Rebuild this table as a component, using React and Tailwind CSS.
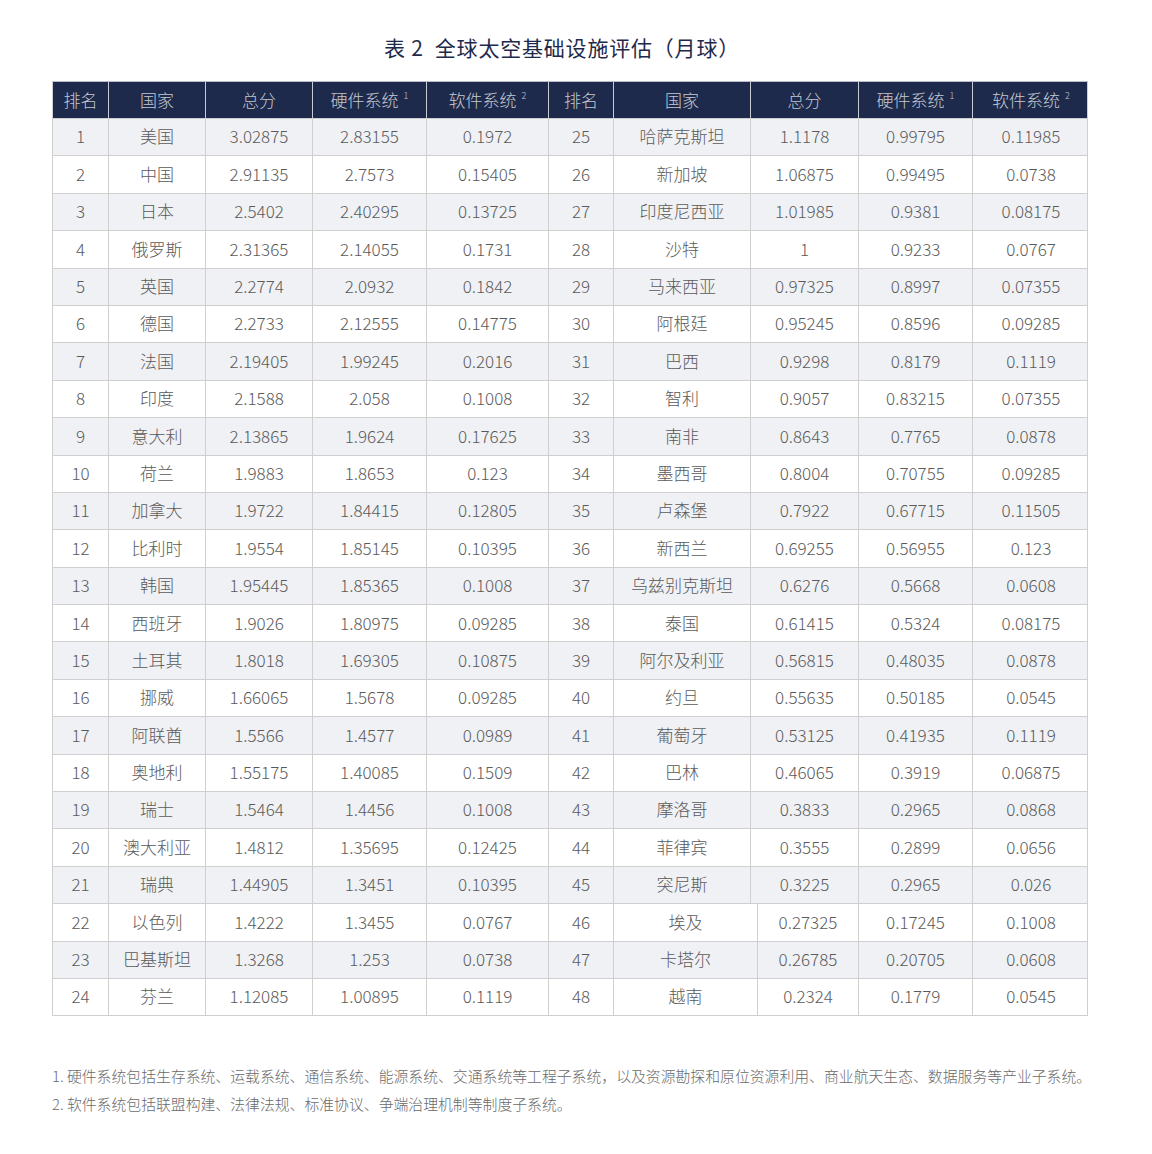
const left = [
  ["1", "美国", "3.02875", "2.83155", "0.1972"],
  ["2", "中国", "2.91135", "2.7573", "0.15405"],
  ["3", "日本", "2.5402", "2.40295", "0.13725"],
  ["4", "俄罗斯", "2.31365", "2.14055", "0.1731"],
  ["5", "英国", "2.2774", "2.0932", "0.1842"],
  ["6", "德国", "2.2733", "2.12555", "0.14775"],
  ["7", "法国", "2.19405", "1.99245", "0.2016"],
  ["8", "印度", "2.1588", "2.058", "0.1008"],
  ["9", "意大利", "2.13865", "1.9624", "0.17625"],
  ["10", "荷兰", "1.9883", "1.8653", "0.123"],
  ["11", "加拿大", "1.9722", "1.84415", "0.12805"],
  ["12", "比利时", "1.9554", "1.85145", "0.10395"],
  ["13", "韩国", "1.95445", "1.85365", "0.1008"],
  ["14", "西班牙", "1.9026", "1.80975", "0.09285"],
  ["15", "土耳其", "1.8018", "1.69305", "0.10875"],
  ["16", "挪威", "1.66065", "1.5678", "0.09285"],
  ["17", "阿联酋", "1.5566", "1.4577", "0.0989"],
  ["18", "奥地利", "1.55175", "1.40085", "0.1509"],
  ["19", "瑞士", "1.5464", "1.4456", "0.1008"],
  ["20", "澳大利亚", "1.4812", "1.35695", "0.12425"],
  ["21", "瑞典", "1.44905", "1.3451", "0.10395"],
  ["22", "以色列", "1.4222", "1.3455", "0.0767"],
  ["23", "巴基斯坦", "1.3268", "1.253", "0.0738"],
  ["24", "芬兰", "1.12085", "1.00895", "0.1119"],
];

const right = [
  ["25", "哈萨克斯坦", "1.1178", "0.99795", "0.11985"],
  ["26", "新加坡", "1.06875", "0.99495", "0.0738"],
  ["27", "印度尼西亚", "1.01985", "0.9381", "0.08175"],
  ["28", "沙特", "1", "0.9233", "0.0767"],
  ["29", "马来西亚", "0.97325", "0.8997", "0.07355"],
  ["30", "阿根廷", "0.95245", "0.8596", "0.09285"],
  ["31", "巴西", "0.9298", "0.8179", "0.1119"],
  ["32", "智利", "0.9057", "0.83215", "0.07355"],
  ["33", "南非", "0.8643", "0.7765", "0.0878"],
  ["34", "墨西哥", "0.8004", "0.70755", "0.09285"],
  ["35", "卢森堡", "0.7922", "0.67715", "0.11505"],
  ["36", "新西兰", "0.69255", "0.56955", "0.123"],
  ["37", "乌兹别克斯坦", "0.6276", "0.5668", "0.0608"],
  ["38", "泰国", "0.61415", "0.5324", "0.08175"],
  ["39", "阿尔及利亚", "0.56815", "0.48035", "0.0878"],
  ["40", "约旦", "0.55635", "0.50185", "0.0545"],
  ["41", "葡萄牙", "0.53125", "0.41935", "0.1119"],
  ["42", "巴林", "0.46065", "0.3919", "0.06875"],
  ["43", "摩洛哥", "0.3833", "0.2965", "0.0868"],
  ["44", "菲律宾", "0.3555", "0.2899", "0.0656"],
  ["45", "突尼斯", "0.3225", "0.2965", "0.026"],
  ["46", "埃及", "0.27325", "0.17245", "0.1008"],
  ["47", "卡塔尔", "0.26785", "0.20705", "0.0608"],
  ["48", "越南", "0.2324", "0.1779", "0.0545"],
];

const heads = ["排名", "国家", "总分", "硬件系统", "软件系统"];
const notes = [null, null, null, "1", "2"];

function Head() {
  const cells = [...heads, ...heads].map((h, i) => (
    <div
      key={i}
      className="flex items-center justify-center border-r border-[#c6cad3] last:border-r-0"
    >
      {h}
      {notes[i % 5] && (
        <sup className="ml-[5px] text-[9px] relative -top-[4px]">{notes[i % 5]}</sup>
      )}
    </div>
  ));
  return (
    <div className="grid grid-cols-[56px_97px_107px_114px_122px_65px_137px_108px_114px_116px] h-[36px] bg-[#1e2a4b] text-[#c3c8d2] text-[17px] font-light">
      {cells}
    </div>
  );
}

function Row({ l, r, i }) {
  const shifted = i >= 21;
  const cols = shifted
    ? "grid-cols-[56px_97px_107px_114px_122px_65px_144px_101px_114px_116px]"
    : "grid-cols-[56px_97px_107px_114px_122px_65px_137px_108px_114px_116px]";
  const bg = i % 2 === 0 ? "bg-[#f0f1f5]" : "bg-white";
  return (
    <div className={`grid ${cols} h-[37.4px] ${bg} border-t border-[#cfcfcf] text-[17px] text-[#5a5a5a] font-light`}>
      {[...l, ...r].map((c, j) => (
        <div
          key={j}
          className="flex items-center justify-center pb-[2px] border-r border-[#cfcfcf] last:border-r-0"
        >
          {c}
        </div>
      ))}
    </div>
  );
}

export default function App() {
  return (
    <div className="w-[1152px] h-[1154px] bg-white font-['Noto_Sans_CJK_SC_Light','Noto_Sans_CJK_SC',sans-serif]">
      <div className="w-[1036px] ml-[52px] pt-[32px]">
        <h1 className="text-center text-[21px] font-normal text-[#1e2a4b] leading-[30px] pr-[16px] font-['Noto_Sans_CJK_SC',sans-serif] tracking-[0.8px]">
          表 2&nbsp; 全球太空基础设施评估（月球）
        </h1>
        <div className="mt-[19px] border border-[#cfcfcf] border-t-[#b9bcc4]">
          <Head />
          {left.map((l, i) => (
            <Row key={i} l={l} r={right[i]} i={i} />
          ))}
        </div>
        <div className="mt-[46px] text-[14.85px] text-[#6a6a6a] font-light leading-[28px] whitespace-nowrap">
          <p>1. 硬件系统包括生存系统、运载系统、通信系统、能源系统、交通系统等工程子系统，以及资源勘探和原位资源利用、商业航天生态、数据服务等产业子系统。</p>
          <p>2. 软件系统包括联盟构建、法律法规、标准协议、争端治理机制等制度子系统。</p>
        </div>
      </div>
    </div>
  );
}
